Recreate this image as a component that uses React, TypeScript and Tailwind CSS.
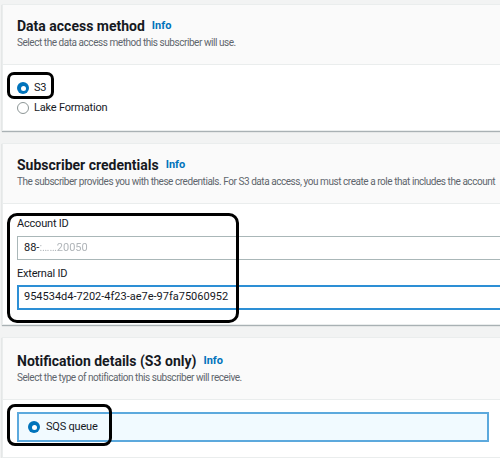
import React from "react";

function Info() {
  return <span className="ml-[7px] text-[11px] font-bold text-[#0073bb]">Info</span>;
}

function Radio({ checked }: { checked?: boolean }) {
  return checked ? (
    <span className="flex h-[12px] w-[12px] items-center justify-center rounded-full bg-[#0073bb]">
      <span className="h-[5px] w-[5px] rounded-full bg-white" />
    </span>
  ) : (
    <span className="h-[12px] w-[12px] rounded-full border border-[#8d9696] bg-white" />
  );
}

function CardHeader({ title, desc, pt }: { title: string; desc: string; pt: string }) {
  return (
    <div className={`border-b border-[#eaeded] bg-[#fafafa] pl-[14px] pb-[14px] ${pt}`}>
      <div className="flex h-[20px] items-center text-[14px] font-bold text-[#16191f]">
        {title}
        <Info />
      </div>
      <div className="h-[14px] whitespace-nowrap text-[10px] leading-[14px] tracking-[-0.45px] text-[#5f666d]">
        {desc}
      </div>
    </div>
  );
}

export default function App() {
  return (
    <div
      className="relative h-[458px] w-[500px] overflow-hidden bg-[#f2f3f3] pl-[2px] pt-[4px]"
      style={{ fontFamily: "Roboto, 'Liberation Sans', sans-serif" }}
    >
      <div className="flex w-[520px] flex-col gap-[12px]">
        {/* Data access method */}
        <div className="border border-[#eaeded] bg-white shadow-[0_1px_1px_0_rgba(0,28,36,0.3)]">
          <CardHeader
            pt="pt-[11px]"
            title="Data access method"
            desc="Select the data access method this subscriber will use."
          />
          <div className="flex flex-col pl-[14px] pt-[13px] pb-[12px] text-[11px] tracking-[-0.2px] text-[#16191f]">
            <label className="flex h-[20px] items-center gap-[5px]">
              <Radio checked />
              S3
            </label>
            <label className="flex h-[20px] items-center gap-[5px]">
              <Radio />
              Lake Formation
            </label>
          </div>
        </div>

        {/* Subscriber credentials */}
        <div className="border border-[#eaeded] bg-white shadow-[0_1px_1px_0_rgba(0,28,36,0.3)]">
          <CardHeader
            pt="pt-[11px]"
            title="Subscriber credentials"
            desc="The subscriber provides you with these credentials. For S3 data access, you must create a role that includes the account"
          />
          <div className="flex flex-col pl-[14px] pt-[11px] pb-[14px] text-[11px] text-[#16191f]">
            <div className="flex h-[19px] items-center tracking-[-0.2px]">Account ID</div>
            <div className="mt-[2px] flex h-[24px] items-center border border-[#aab7b8] px-[6px]">
              88-<span className="text-[#b0b5b9] blur-[0.6px]">:……20050</span>
            </div>
            <div className="mt-[5px] flex h-[19px] items-center tracking-[-0.2px]">External ID</div>
            <div className="mt-[1px] flex h-[25px] items-center border-2 border-[#2d8fd5] px-[5px]">
              954534d4-7202-4f23-ae7e-97fa75060952
            </div>
          </div>
        </div>

        {/* Notification details */}
        <div className="border border-[#eaeded] bg-white shadow-[0_1px_1px_0_rgba(0,28,36,0.3)]">
          <CardHeader
            pt="pt-[13px]"
            title="Notification details (S3 only)"
            desc="Select the type of notification this subscriber will receive."
          />
          <div className="pl-[14px] pt-[12px] pb-[15px]">
            <div className="flex h-[30px] w-[472px] items-center gap-[6px] border-2 border-[#5ca9dd] bg-[#f1faff] pl-[9px] text-[11px] tracking-[-0.2px] text-[#16191f]">
              <Radio checked />
              SQS queue
            </div>
          </div>
        </div>
      </div>

      {/* annotation outlines */}
      <div className="absolute left-[7px] top-[72px] h-[27px] w-[47px] rounded-[7px] border-[3px] border-black" />
      <div className="absolute left-[7px] top-[213px] h-[110px] w-[232px] rounded-[10px] border-[3px] border-black" />
      <div className="absolute left-[7px] top-[404px] h-[42px] w-[105px] rounded-[8px] border-[3px] border-black" />
    </div>
  );
}
